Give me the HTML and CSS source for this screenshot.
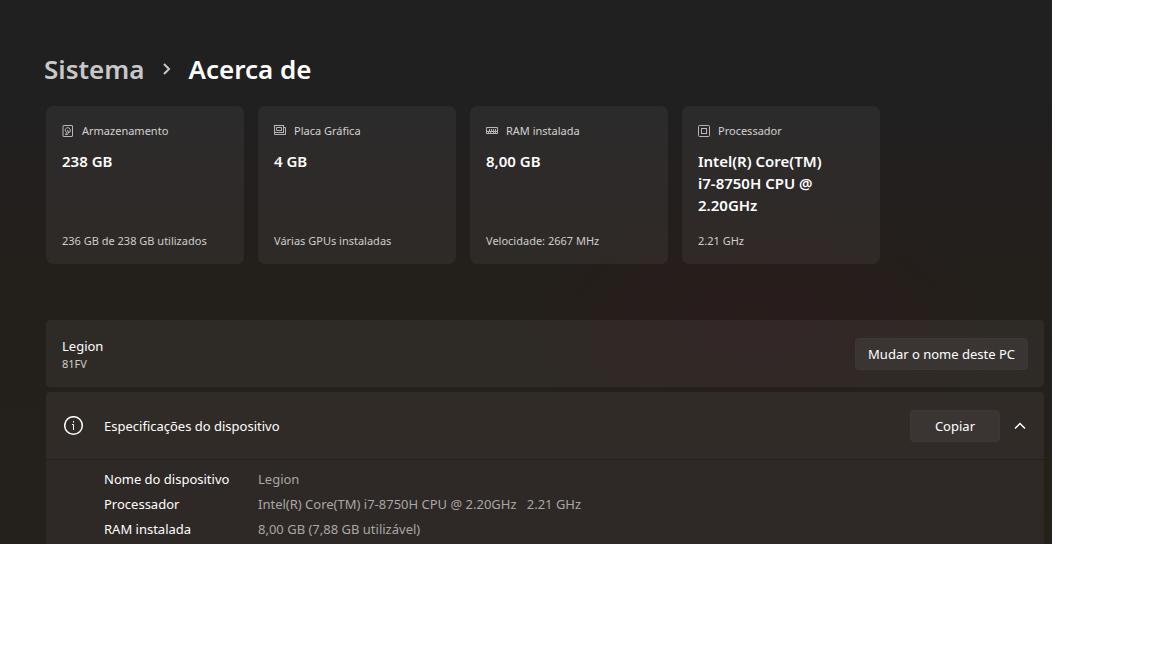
FILE: index.html
```
<!DOCTYPE html>
<html lang="pt">

<head>
    <meta charset="UTF-8">
    <meta name="viewport" content="width=device-width, initial-scale=1.0">
    <title>Acerca de</title>

    <link rel="stylesheet" href="styles.css">
</head>

<body>
    <main class="settings">
        <h1 class="title">
            <a class="title-link" href="#">Sistema</a>
            <svg class="title-arrow" viewBox="0 0 12 14" width="12" height="14">
                <path d="M4 2l5 5-5 5" />
            </svg>
            <span>Acerca de</span>
        </h1>

        <section class="cards">
            <article class="card">
                <h2 class="card-head">
                    <svg class="card-icon" viewBox="0 0 12 12" width="12" height="12">
                        <rect x="1" y=".5" width="9.5" height="11" rx=".5" />
                        <path d="M3.5 6.5A2.6 2.6 0 1 1 6.5 7.8M6 5L3.5 9.5h2L7 6" />
                    </svg>
                    Armazenamento
                </h2>
                <p class="card-value">238 GB</p>
                <p class="card-note">236 GB de 238 GB utilizados</p>
            </article>
            <article class="card">
                <h2 class="card-head">
                    <svg class="card-icon" viewBox="0 0 12 12" width="12" height="12">
                        <rect x=".5" y=".5" width="9" height="7" />
                        <path d="M2.5 2.5h5v3h-5zM.5 7.5v2h11v-7H10" />
                    </svg>
                    Placa Gráfica
                </h2>
                <p class="card-value">4 GB</p>
                <p class="card-note">Várias GPUs instaladas</p>
            </article>
            <article class="card">
                <h2 class="card-head">
                    <svg class="card-icon" viewBox="0 0 12 12" width="12" height="12">
                        <path d="M.5 2.5h11v6H.5zM3.5 4v2M5.5 4v2M7.5 4v2M9.5 4v2M1 6.5h10M2.5 7v2M4.5 7v2M7.5 7v2M9.5 7v2" />
                    </svg>
                    RAM instalada
                </h2>
                <p class="card-value">8,00 GB</p>
                <p class="card-note">Velocidade: 2667 MHz</p>
            </article>
            <article class="card">
                <h2 class="card-head">
                    <svg class="card-icon" viewBox="0 0 12 12" width="12" height="12">
                        <rect x=".5" y=".5" width="11" height="11" rx="1" />
                        <rect x="3.5" y="3.5" width="5" height="5" />
                    </svg>
                    Processador
                </h2>
                <p class="card-value">Intel(R) Core(TM) i7-8750H CPU @ 2.20GHz</p>
                <p class="card-note">2.21 GHz</p>
            </article>
        </section>

        <section class="row">
            <div class="pc">
                <p class="pc-name">Legion</p>
                <p class="pc-model">81FV</p>
            </div>
            <button class="btn" type="button">Mudar o nome deste PC</button>
        </section>

        <section class="specs">
            <div class="row row-specs">
                <svg class="info" viewBox="0 0 20 20" width="20" height="20">
                    <circle cx="9.5" cy="9.5" r="8.8" />
                    <path class="info-i" d="M8 8.5h1.5v5.5M9.5 5v1.6" />
                </svg>
                <h2 class="row-title">Especificações do dispositivo</h2>
                <button class="btn btn-copy" type="button">Copiar</button>
                <button class="toggle" type="button" aria-label="Fechar" aria-expanded="true">
                    <svg class="toggle-icon" viewBox="0 0 12 8" width="12" height="8">
                        <path d="M1 6.5l5-5 5 5" />
                    </svg>
                </button>
            </div>
            <dl class="list">
                <dt>Nome do dispositivo</dt>
                <dd>Legion</dd>
                <dt>Processador</dt>
                <dd>Intel(R) Core(TM) i7-8750H CPU @ 2.20GHz &nbsp; 2.21 GHz</dd>
                <dt>RAM instalada</dt>
                <dd>8,00 GB (7,88 GB utilizável)</dd>
            </dl>
        </section>
    </main>
</body>

</html>
```
FILE: styles.css
```
* {
    box-sizing: border-box;
    padding: 0;
    margin: 0;
}

body {
    padding-right: 100px;
    background-color: #fff;
    font-family: "Segoe UI", "Noto Sans", "Open Sans", sans-serif;
    font-size: 13px;
    line-height: 18px;
    color: #fff;
}

.settings {
    padding: 48px 8px 0 46px;
    background:
        radial-gradient(ellipse 240px 130px at 72% 60%, rgba(42, 28, 28, 0.9), rgba(42, 28, 28, 0)),
        linear-gradient(#202020 0, #202020 18%, #231f1e 34%, #231f1b 50%, #24201c 100%);
}

h2 {
    font-weight: 400;
}

svg {
    fill: none;
    stroke: currentColor;
    flex: none;
}

/* breadcrumb */
.title {
    display: flex;
    align-items: center;
    gap: 16px;
    margin-left: -2px;
    font-size: 26px;
    font-weight: 600;
    line-height: 42px;
}

.title-link {
    color: #c8c8c8;
    text-decoration: none;
}

.title-arrow {
    color: #c8c8c8;
    stroke-width: 2;
}

/* hardware cards */
.cards {
    display: grid;
    grid-template-columns: repeat(auto-fit, 198px);
    gap: 14px;
    margin: 16px 0 56px;
}

.card {
    display: flex;
    flex-direction: column;
    min-height: 158px;
    padding: 16px 16px 14px;
    border-radius: 7px;
    background-color: rgba(255, 255, 255, 0.05);
}

.card-head {
    display: flex;
    align-items: center;
    gap: 8px;
    font-size: 11px;
    color: #d4d2d2;
}

.card-icon {
    color: #b8b6b6;
}

.card-value {
    margin-top: 10px;
    padding-right: 30px;
    font-size: 15px;
    font-weight: 600;
    line-height: 22px;
}

.card-note {
    margin-top: auto;
    font-size: 11px;
    color: #d0cdcc;
}

/* rows */
.row {
    display: flex;
    align-items: center;
    min-height: 67px;
    padding: 0 16px;
    border-radius: 4px;
    background-color: rgba(255, 255, 255, 0.05);
}

.pc {
    flex: 1;
    padding-top: 2px;
}

.pc-model {
    font-size: 11px;
    color: #d0cdcc;
}

.btn {
    height: 32px;
    padding: 0 12px;
    border: 1px solid #3d3836;
    border-radius: 4px;
    background-color: #3a3533;
    font: inherit;
    color: #fff;
}

.specs {
    margin-top: 5px;
}

.row-specs {
    border-radius: 4px 4px 0 0;
    background-color: #302b27;
}

.info {
    margin: 0 20px 0 2px;
    stroke-width: 1.5;
}

.info-i {
    stroke-width: 1;
}

.row-title {
    flex: 1;
    font-size: 13px;
}

.btn-copy {
    padding: 0 24px;
}

.toggle {
    display: flex;
    margin: 0 2px 0 14px;
    border: 0;
    background: none;
    color: #fff;
}

.toggle-icon {
    stroke-width: 1.5;
}

.list {
    display: grid;
    grid-template-columns: 140px 1fr;
    column-gap: 14px;
    margin-top: 1px;
    padding: 7px 16px 2px 58px;
    background-color: #2e2926;
    line-height: 25px;
}

.list dd {
    color: #aaa6a4;
}
```
